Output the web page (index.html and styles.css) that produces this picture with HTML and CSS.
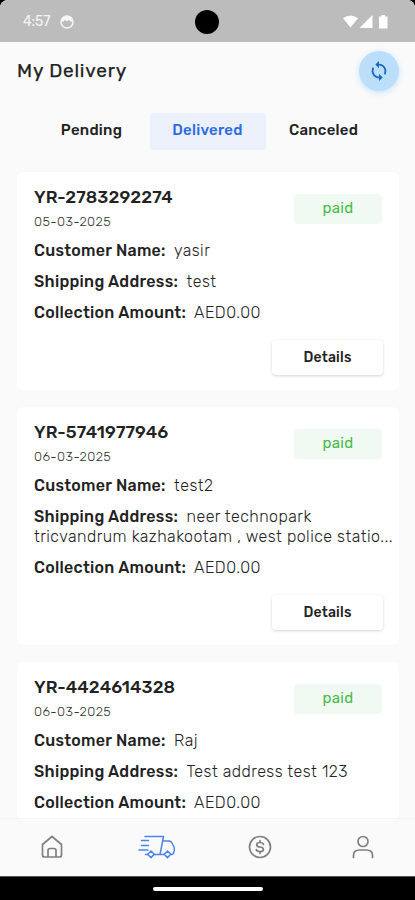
FILE: index.html
```
<!DOCTYPE html>
<html lang="en">
<head>
<meta charset="utf-8">
<meta name="viewport" content="width=device-width, initial-scale=1">
<title>My Delivery</title>
<link rel="stylesheet" href="styles.css">
</head>
<body>
<div class="phone">
  <header class="status">
    <span class="clock">4:57</span>
    <svg class="face" viewBox="0 0 14 14"><circle cx="7" cy="7" r="6" fill="none" stroke="#f5f5f5" stroke-width="1.5"/><path d="M1 6C1.500 2.500 4 1 7 1s5.500 1.500 6 5l-2.200.8L9 5 7 6.200 5 5 3.200 6.800z" fill="#f5f5f5"/></svg>
    <i class="camera"></i>
    <svg class="signals" viewBox="0 0 46 14"><path d="M0 3.300Q7.500-2.500 15 3.300L7.500 12.500z M29.500 0v13H16.500z M36 1.500h2.500V0h3.500v1.500h2.500V13.500H36z" fill="#fff"/></svg>
  </header>
  <div class="topbar">
    <h1>My Delivery</h1>
    <button class="refresh" aria-label="Refresh"><svg viewBox="0 0 24 24"><path fill="#1b68c0" d="M12 4V1L8 5l4 4V6c3.310 0 6 2.690 6 6 0 1.010-.25 1.970-.7 2.800l1.460 1.460C19.540 15.030 20 13.570 20 12c0-4.420-3.580-8-8-8zm0 14c-3.310 0-6-2.690-6-6 0-1.010.25-1.970.7-2.800L5.240 7.740C4.460 8.970 4 10.430 4 12c0 4.420 3.580 8 8 8v3l4-4-4-4v3z"/></svg></button>
  </div>
  <nav class="tabs">
    <span class="tab">Pending</span>
    <span class="tab active">Delivered</span>
    <span class="tab">Canceled</span>
  </nav>
  <main class="list">
    <article class="card">
      <div class="head"><div><h2>YR-2783292274</h2><time>05-03-2025</time></div><span class="paid">paid</span></div>
      <p><b class="name">Customer Name:</b>yasir</p>
      <p><b class="address">Shipping Address:</b>test</p>
      <p><b class="amount">Collection Amount:</b>AED0.00</p>
      <button class="details">Details</button>
    </article>
    <article class="card">
      <div class="head"><div><h2>YR-5741977946</h2><time>06-03-2025</time></div><span class="paid">paid</span></div>
      <p><b class="name">Customer Name:</b>test2</p>
      <p><b class="address">Shipping Address:</b>neer technopark<br>tricvandrum kazhakootam , west police statio...</p>
      <p><b class="amount">Collection Amount:</b>AED0.00</p>
      <button class="details">Details</button>
    </article>
    <article class="card last">
      <div class="head"><div><h2>YR-4424614328</h2><time>06-03-2025</time></div><span class="paid">paid</span></div>
      <p><b class="name">Customer Name:</b>Raj</p>
      <p><b class="address">Shipping Address:</b>Test address test 123</p>
      <p><b class="amount">Collection Amount:</b>AED0.00</p>
    </article>
  </main>
  <nav class="bottom">
    <svg class="home" viewBox="0 0 22 24"><path d="M1.500 9.500 11 1.500l9.500 8V20q0 2-2 2h-15q-2 0-2-2zM7 22v-6.500q0-2 2-2h4q2 0 2 2V22"/></svg>
    <svg class="truck" viewBox="0 0 38 24"><path d="M7 1.500h18.500L22 19.500h4M7.500 19.500h2M16 19.500h6M24.500 6H31q2 0 3 2l2 4q.7 1.500.2 3.500l-.7 2.500q-.4 1.500-2 1.500h-.5M3.500 5.500h7M3.500 10.500h7M1 15h9"/><path d="m13 16 3.300 3.300-3.300 3.300-3.300-3.300zM29.500 16l3.300 3.300-3.300 3.300-3.300-3.300z"/></svg>
    <svg class="coin" viewBox="0 0 24 24"><circle cx="12" cy="12" r="10.500"/><path d="M15.500 9.500q-.5-2-3.500-2-3.300 0-3.300 2.200T12 12q3.400.3 3.400 2.400T12 16.500q-3.300 0-3.700-2M12 5.700v1.800M12 16.500v1.800"/></svg>
    <svg class="user" viewBox="0 0 22 24"><circle cx="11" cy="6.500" r="5"/><path d="M1.500 22.500V20.500q0-5.500 6-5.500h7q6 0 6 5.500v2"/></svg>
  </nav>
  <footer class="gesture"><i></i></footer>
</div>
</body>
</html>
```
FILE: styles.css
```
* { box-sizing: border-box; }
body { margin: 0; background: #000; font-family: Rubik, Roboto, sans-serif; color: #222; }
.phone { width: 415px; height: 900px; display: flex; flex-direction: column; overflow: hidden; border-radius: 8px 8px 0 0; background: #fafafa; }
.status { height: 42px; flex: none; background: #bcbcbc; display: flex; align-items: center; padding: 1px 26px 0 23px; }
.clock { width: 37px; font-size: 14px; letter-spacing: -.1px; color: #f5f5f5; }
.face { width: 14px; height: 14px; }
.camera { width: 24px; height: 24px; border-radius: 50%; background: #000; margin-left: 121px; }
.signals { width: 46px; height: 14px; margin-left: auto; }
.topbar { height: 58px; flex: none; display: flex; align-items: center; justify-content: space-between; padding: 0 16px 0 17px; }
h1 { margin: -2px 0 0; font-size: 19px; font-weight: 400; letter-spacing: .8px; -webkit-text-stroke: .25px; }
.refresh { width: 40px; height: 40px; border: 0; border-radius: 50%; background: #bbdefb; padding: 9px; box-shadow: 0 2px 6px #bbdefbcc; }
.refresh svg { width: 22px; height: 22px; display: block; }
.tabs { height: 50px; flex: none; display: flex; justify-content: center; align-items: center; margin-top: 6px; }
.tab { width: 116px; height: 37px; line-height: 35px; text-align: center; font-size: 15px; font-weight: 500; letter-spacing: .25px; border-radius: 4px; }
.active { background: #ebf0fa; color: #2b6be0; }
.list { flex: 1; min-height: 0; padding: 16px 16px 0 17px; display: flex; flex-direction: column; gap: 17px; }
.card { flex: none; background: #fff; border-radius: 6px; padding: 15px 16px 15px 17px; box-shadow: 0 0 3px #00000005; }
.last { flex: 1; padding-bottom: 0; border-radius: 6px 6px 0 0; }
.head { display: flex; justify-content: space-between; height: 54px; }
h2 { margin: 0; font-size: 17.5px; line-height: 21px; font-weight: 500; letter-spacing: .1px; }
time { display: block; margin-top: 5px; font-size: 13px; line-height: 17px; font-weight: 300; letter-spacing: .4px; color: #333; }
.paid { width: 88px; height: 30px; margin: 7px 1px 0 0; border-radius: 4px; background: #f1faf2; color: #48bc4b; text-align: center; font-size: 15px; line-height: 29px; letter-spacing: .3px; }
p { margin: 0 0 11px; font-size: 16px; line-height: 20px; font-weight: 300; letter-spacing: .48px; white-space: nowrap; color: #222; }
b { display: inline-block; font-weight: 500; letter-spacing: .28px; }
.name { width: 140px; }
.address { width: 152.5px; }
.amount { width: 160px; }
.details { display: block; width: 111px; height: 35px; margin: 17px 0 0 auto; border: 0; border-radius: 4px; background: #fff; box-shadow: 0 1px 3px #0000002b; font: 500 14px Rubik, Roboto, sans-serif; letter-spacing: .2px; color: #222; padding: 0; }
.bottom { height: 58px; flex: none; display: flex; align-items: center; background: #fafafa; padding: 0 41px 1px; border-top: 1px solid #f5f5f5; }
.bottom svg { fill: none; stroke: #808080; stroke-width: 1.700; stroke-linejoin: round; stroke-linecap: round; }
.home { width: 22px; height: 24px; }
.bottom .truck { width: 38px; height: 24px; margin-left: 74.5px; stroke: #4b84ea; stroke-width: 1.500; }
.coin { width: 24px; height: 24px; margin-left: 72.5px; }
.user { width: 22px; height: 24px; margin-left: auto; }
.gesture { height: 24px; flex: none; background: #000; display: flex; justify-content: center; align-items: center; border-top: 1px solid #555; }
.gesture i { width: 110px; height: 4px; border-radius: 2px; background: #fff; }
```
